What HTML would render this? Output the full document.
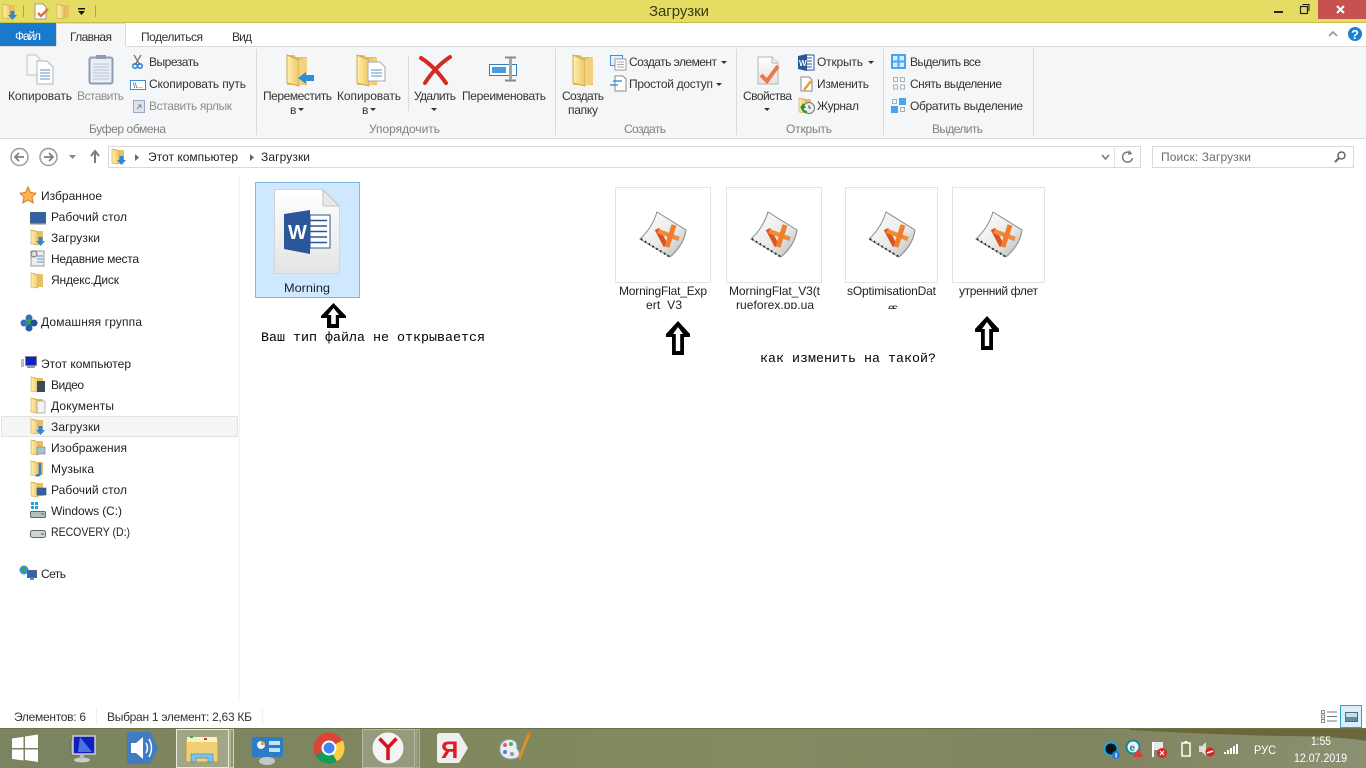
<!DOCTYPE html>
<html lang="ru"><head><meta charset="utf-8"><title>Загрузки</title>
<style>
html,body{margin:0;padding:0;width:1366px;height:768px;overflow:hidden;background:#fff}
svg{display:block;position:absolute;left:0;top:0}
text{font-family:"Liberation Sans","Noto Sans CJK SC",sans-serif;font-size:12px;fill:#222}
.g{fill:#8e8e8e}.l{fill:#808080}.t{fill:#333}.s{fill:#6d6d6d}
.m{font-family:"Liberation Mono",monospace;font-size:13.33px;fill:#000}
.w{fill:#fff}.tt{font-size:15px;fill:#3c3a10}
</style></head><body>
<svg width="1366" height="768" viewBox="0 0 1366 768" xmlns="http://www.w3.org/2000/svg">
<defs>
<linearGradient id="fo" x1="0" x2="1" y1="0" y2="0"><stop offset="0" stop-color="#fff0b0"/><stop offset="1" stop-color="#eec766"/></linearGradient>
<linearGradient id="pg" x1="0" x2="0" y1="0" y2="1"><stop offset="0" stop-color="#fff"/><stop offset="1" stop-color="#e4e4e4"/></linearGradient>
<linearGradient id="mt" x1="0" x2="1" y1="0" y2="1"><stop offset="0" stop-color="#fff"/><stop offset=".6" stop-color="#e8e8e8"/><stop offset="1" stop-color="#b5b5b5"/></linearGradient>
<linearGradient id="tb" x1="0" x2="1" y1="0" y2="0"><stop offset="0" stop-color="#7a8460"/><stop offset=".4" stop-color="#80885e"/><stop offset=".55" stop-color="#838c61"/><stop offset=".8" stop-color="#808460"/><stop offset="1" stop-color="#8b9070"/></linearGradient>
<g id="f"><path d="M1 1h4l1 1h7v13H1z" fill="#e8c061"/><path d="M1 1l7 2v13l-7-1z" fill="url(#fo)" stroke="#d3ad58" stroke-width=".7"/></g>
<g id="dl"><use href="#f"/><path d="M8.500 8h4v4h2.500l-4.500 5-4.500-5h2.500z" fill="#2f86d6"/></g>
<g id="bf"><path d="M2 1h7l2 2h11v28H2z" fill="#e8bf60"/><path d="M2 1l12 5v26l-12-3z" fill="url(#fo)" stroke="#cfa64f"/><path d="M14 6l8-3v26l-8 3z" fill="#f3d27f"/></g>
<g id="mt4"><path d="M657 212L686 230Q684 245 670 257L640 239Q652 228 657 212Z" fill="url(#mt)" stroke="#8a8a8a"/><path d="M641 239L670 257" stroke="#222" stroke-width="2" stroke-dasharray="1.500 3"/><path d="M657 229L666 246" stroke="#d9541e" stroke-width="5"/><path d="M658 231L679 239" stroke="#f08c3e" stroke-width="4.500"/><path d="M674 225L667 247" stroke="#ef7d2c" stroke-width="5"/></g>
<g id="arr"><path d="M12 0L24 13V16H18V34H6V16H0V13Z" fill="#000"/><path d="M12 6L17 13H14.200V30H9.800V13H7Z" fill="#fff"/></g>
</defs>

<!-- title bar -->
<rect width="1366" height="23" fill="#e5dc63"/><rect y="22" width="1366" height="1" fill="#c7bd50"/>
<use href="#dl" x="2" y="3"/>
<rect x="23" y="5" width="1" height="12" fill="#a8a366"/>
<path d="M35 4h8l3 3v12H35z" fill="#fff" stroke="#888" stroke-width=".8"/><path d="M38 13l3 3 7-7" stroke="#e5703f" stroke-width="2.500" fill="none"/>
<use href="#f" x="56" y="3"/>
<rect x="78" y="8" width="7" height="1.500" fill="#111"/><path d="M78 11h7l-3.500 4z" fill="#111"/>
<rect x="95" y="5" width="1" height="12" fill="#a8a366"/>
<text x="649" y="16" textLength="60" class="tt">Загрузки</text>
<rect x="1274" y="11" width="9" height="2" fill="#222"/>
<path d="M1302.500 4.500h6.500v6.500" fill="none" stroke="#222"/><rect x="1300.500" y="6.500" width="7" height="7" fill="none" stroke="#222" stroke-width="1.200"/>
<rect x="1318" width="48" height="19" fill="#c75050"/><path d="M1337 6l7 7M1344 6l-7 7" stroke="#fff" stroke-width="2"/>

<!-- tabs -->
<rect y="23" width="1366" height="23" fill="#fff"/>
<rect y="23" width="56" height="23" fill="#1979ca"/><text x="15" y="40" textLength="26" class="w">Файл</text>
<rect x="56.500" y="23.500" width="69" height="24" fill="#f5f6f7" stroke="#dadbdc"/><rect x="57" y="45" width="68" height="3" fill="#f5f6f7"/>
<text x="70" y="41" textLength="42" class="t">Главная</text>
<text x="141" y="41" textLength="62" class="t">Поделиться</text>
<text x="232" y="41" textLength="20" class="t">Вид</text>
<path d="M1329 36l4-4 4 4" fill="none" stroke="#9a9a9a" stroke-width="1.800"/>
<circle cx="1355" cy="34" r="7" fill="#1a80d2"/><text x="1351" y="39" class="w" style="font-size:13px;font-weight:bold">?</text>

<!-- ribbon -->
<rect y="46" width="1366" height="92" fill="#f5f6f7"/>
<rect y="46" width="56" height="1" fill="#dadbdc"/><rect x="126" y="46" width="1240" height="1" fill="#dadbdc"/>
<rect y="138" width="1366" height="1" fill="#dadbdc"/>
<g fill="#dadbdc"><rect x="256" y="49" width="1" height="86"/><rect x="555" y="49" width="1" height="86"/><rect x="736" y="49" width="1" height="86"/><rect x="883" y="49" width="1" height="86"/><rect x="1033" y="49" width="1" height="86"/><rect x="408" y="56" width="1" height="55"/></g>

<!-- ribbon icons -->
<path d="M27 55h9l4 4v16H27z" fill="#f8f8f8" stroke="#c2c2c2"/>
<path d="M37 61h10l6 6v17H37z" fill="#fff" stroke="#b5b5b5"/><path d="M40 70h10M40 73h10M40 76h10M40 79h10" stroke="#5f92c8"/>
<rect x="89.500" y="57.500" width="23" height="26" rx="2" fill="#e9edf5" stroke="#8d9db6" stroke-width="2"/><rect x="96" y="55" width="10" height="4" fill="#8d9db6"/><path d="M93 64h16M93 67h16M93 70h16M93 73h16M93 76h16M93 79h16" stroke="#bcc8dc"/>
<path d="M134 55l6 10M141 55l-6 10" stroke="#777" stroke-width="1.300"/><circle cx="135" cy="66" r="2.300" fill="none" stroke="#2a7fd0" stroke-width="1.500"/><circle cx="140" cy="66" r="2.300" fill="none" stroke="#2a7fd0" stroke-width="1.500"/>
<rect x="130.500" y="80.500" width="15" height="9" fill="#fff" stroke="#3d8fdc"/><text x="133" y="88" style="font-size:7px;fill:#333">\\...</text>
<rect x="133.500" y="100.500" width="11" height="12" fill="#dde3ec" stroke="#9aa9bf"/><path d="M137 109l4-4m-3 0h3v3" stroke="#7c8ca6" fill="none"/>
<use href="#bf" x="285" y="54"/><path d="M298 78l8-6v3h8v6h-8v3z" fill="#2b8fe0"/>
<use href="#bf" x="355" y="54"/><path d="M368 62h12l5 5v14h-17z" fill="#fff" stroke="#aaa"/><path d="M371 70h11M371 73h11M371 76h11" stroke="#5f92c8"/>
<path d="M421 58Q434 66 446 83M450 57Q435 67 425 83" fill="none" stroke="#d52a22" stroke-width="4" stroke-linecap="round"/>
<rect x="489.500" y="64.500" width="27" height="11" fill="#fff" stroke="#2f7fc0"/><rect x="492" y="67" width="14" height="6" fill="#4b9be0"/><path d="M505 57.500h11M505 80.500h11" stroke="#8a8a8a" stroke-width="2"/><rect x="509" y="58" width="3" height="22" fill="#a5a5a5"/>
<use href="#bf" x="571" y="54"/>
<rect x="610.500" y="55.500" width="12" height="10" fill="#e5f0fb" stroke="#3d8fdc"/><path d="M615 59h11v11h-11z" fill="#fff" stroke="#9a9a9a"/><path d="M617 62h7M617 64.500h7M617 67h7" stroke="#aaa"/>
<path d="M615 76h8l3 3v12h-11z" fill="#fff" stroke="#888"/><path d="M610 85h8M613 81h9" stroke="#2a7fd0" stroke-width="1.300"/>
<path d="M758 57h14l6 6v21h-20z" fill="url(#pg)" stroke="#b5b5b5"/><path d="M772 57v6h6" fill="#eee" stroke="#b5b5b5"/><path d="M761 75l6 6 11-15" stroke="#e9784a" stroke-width="4" fill="none"/>
<rect x="804" y="55" width="10" height="15" fill="#fff" stroke="#2b579a"/><path d="M806 58h6M806 61h6M806 64h6M806 67h6" stroke="#2b579a"/><path d="M798 56l9-2v17l-9-2z" fill="#2b579a"/><text x="799" y="66" style="font-size:8px;font-weight:bold" class="w">W</text>
<path d="M801 77h8l3 3v11h-11z" fill="#fff" stroke="#888"/><path d="M804 90l7-9" stroke="#e6a127" stroke-width="2.500"/>
<use href="#f" x="798" y="97"/><circle cx="809" cy="108" r="5.500" fill="#eee" stroke="#777"/><path d="M803 103l-3 5h6z" fill="#1e9a2c"/><path d="M802 106a5 5 0 0 0 5 6" stroke="#1e9a2c" stroke-width="2" fill="none"/><path d="M809 105v3h2" stroke="#555" fill="none"/>
<rect x="891" y="54" width="15" height="15" fill="#4aa3ef"/><path d="M893 56h4.500v4.500h-4.500zM899.500 56h4.500v4.500h-4.500zM893 62.500h4.500v4.500h-4.500zM899.500 62.500h4.500v4.500h-4.500z" fill="#d8ebfb"/>
<g fill="none" stroke="#aab0b8"><rect x="893.500" y="77.500" width="4" height="4"/><rect x="900.500" y="77.500" width="4" height="4"/><rect x="893.500" y="85" width="4" height="4"/><rect x="900.500" y="85" width="4" height="4"/></g>
<rect x="892.500" y="99.500" width="4" height="4" fill="none" stroke="#aab0b8"/><rect x="899" y="98" width="7" height="7" fill="#4aa3ef"/><rect x="891" y="106" width="7" height="7" fill="#4aa3ef"/><rect x="900.500" y="107.500" width="4" height="4" fill="none" stroke="#aab0b8"/>

<!-- ribbon text -->
<text x="8" y="100" textLength="64" class="t">Копировать</text>
<text x="77" y="100" textLength="47" class="g">Вставить</text>
<text x="149" y="66" textLength="50" class="t">Вырезать</text>
<text x="149" y="88" textLength="97" class="t">Скопировать путь</text>
<text x="149" y="110" textLength="83" class="g">Вставить ярлык</text>
<text x="89" y="133" textLength="77" class="l">Буфер обмена</text>
<text x="263" y="100" textLength="69" class="t">Переместить</text><text x="290" y="114" class="t">в</text><path d="M298 108h6l-3 3z" fill="#333"/>
<text x="337" y="100" textLength="64" class="t">Копировать</text><text x="362" y="114" class="t">в</text><path d="M370 108h6l-3 3z" fill="#333"/>
<text x="414" y="100" textLength="42" class="t">Удалить</text><path d="M431 108h6l-3 3z" fill="#333"/>
<text x="462" y="100" textLength="84" class="t">Переименовать</text>
<text x="369" y="133" textLength="71" class="l">Упорядочить</text>
<text x="562" y="100" textLength="42" class="t">Создать</text><text x="568" y="114" textLength="30" class="t">папку</text>
<text x="629" y="66" textLength="88" class="t">Создать элемент</text><path d="M721 61h6l-3 3z" fill="#333"/>
<text x="629" y="88" textLength="84" class="t">Простой доступ</text><path d="M716 83h6l-3 3z" fill="#333"/>
<text x="624" y="133" textLength="42" class="l">Создать</text>
<text x="743" y="100" textLength="49" class="t">Свойства</text><path d="M764 108h6l-3 3z" fill="#333"/>
<text x="817" y="66" textLength="46" class="t">Открыть</text><path d="M868 61h6l-3 3z" fill="#333"/>
<text x="817" y="88" textLength="52" class="t">Изменить</text>
<text x="817" y="110" textLength="42" class="t">Журнал</text>
<text x="786" y="133" textLength="46" class="l">Открыть</text>
<text x="910" y="66" textLength="71" class="t">Выделить все</text>
<text x="910" y="88" textLength="92" class="t">Снять выделение</text>
<text x="910" y="110" textLength="113" class="t">Обратить выделение</text>
<text x="932" y="133" textLength="51" class="l">Выделить</text>

<!-- nav -->
<g fill="none" stroke="#9c9c9c" stroke-width="1.500"><circle cx="19.500" cy="157" r="8.500"/><circle cx="48.500" cy="157" r="8.500"/></g>
<path d="M24 157h-8M19 153l-4 4 4 4M44 157h8M49 153l4 4-4 4" fill="none" stroke="#7d7d7d" stroke-width="1.700"/>
<path d="M69 155h7l-3.500 4z" fill="#8a8a8a"/>
<path d="M95 163v-11M91 156l4-5 4 5" fill="none" stroke="#7d7d7d" stroke-width="2"/>
<rect x="108.500" y="146.500" width="1032" height="21" fill="#fff" stroke="#d9d9d9"/>
<rect x="1114" y="147" width="1" height="20" fill="#e2e2e2"/>
<use href="#dl" x="111" y="148"/>
<path d="M135 154l4 3.500-4 3.500z" fill="#666"/><path d="M250 154l4 3.500-4 3.500z" fill="#666"/>
<text x="148" y="161" textLength="90">Этот компьютер</text>
<text x="261" y="161" textLength="49">Загрузки</text>
<path d="M1102 155l3.500 4 3.500-4" fill="none" stroke="#777" stroke-width="1.500"/>
<path d="M1131.500 154a5 5 0 1 0 1 4" fill="none" stroke="#777" stroke-width="1.500"/><path d="M1129 150l3 4-4 1z" fill="#777"/>
<rect x="1152.500" y="146.500" width="201" height="21" fill="#fff" stroke="#d9d9d9"/>
<text x="1161" y="161" textLength="90" class="s">Поиск: Загрузки</text>
<circle cx="1341.500" cy="155.500" r="3.500" fill="none" stroke="#666" stroke-width="1.500"/><path d="M1339 158l-4 4" stroke="#666" stroke-width="2"/>

<!-- sidebar -->
<rect x="239" y="175" width="1" height="525" fill="#f3f3f3"/>
<rect x="1.500" y="416.500" width="236" height="20" fill="#f5f5f5" stroke="#e2e2e2"/>
<path d="M28 187l2.500 5.500 5.500.7-4 4 1.200 5.800-5.200-3-5.200 3 1.200-5.800-4-4 5.500-.7z" fill="#f7b84c" stroke="#e0762a"/>
<rect x="30.500" y="212.500" width="15" height="10" fill="#2f62a8" stroke="#44618a"/><rect x="30" y="223" width="16" height="1.500" fill="#888"/>
<use href="#dl" x="30" y="229"/>
<rect x="31" y="251" width="13" height="15" fill="#eee" stroke="#999"/><circle cx="34" cy="254" r="3" fill="#ddd" stroke="#777"/><path d="M37 256h6M37 259h6M37 262h6" stroke="#5b92c9"/>
<use href="#f" x="30" y="272"/>
<circle cx="24" cy="323" r="3.500" fill="#3a6fb8"/><circle cx="29" cy="318" r="3.500" fill="#3a6fb8"/><circle cx="30" cy="323" r="3.500" fill="#35a24a"/><circle cx="34" cy="323" r="3.500" fill="#284f96"/><circle cx="29" cy="328" r="3.500" fill="#2a5aa6"/>
<rect x="25.500" y="356.500" width="11" height="9" fill="#1320c8" stroke="#888"/><rect x="21" y="359" width="3" height="8" fill="#bbb"/><rect x="27" y="366" width="8" height="2" fill="#999"/>
<use href="#f" x="30" y="376"/><rect x="37" y="381" width="8" height="11" fill="#3b4a5a"/>
<use href="#f" x="30" y="397"/><rect x="37" y="401" width="8" height="12" fill="#f3f3f3" stroke="#999" stroke-width=".7"/>
<use href="#dl" x="30" y="418"/>
<use href="#f" x="30" y="439"/><rect x="37" y="447" width="8" height="7" fill="#9ec4d9" stroke="#888" stroke-width=".7"/>
<use href="#f" x="30" y="460"/><path d="M40 463v11a3 3 0 0 1-4 1" stroke="#2a80d0" stroke-width="2.500" fill="none"/>
<use href="#f" x="30" y="481"/><rect x="37" y="488" width="9" height="7" fill="#2f62a8" stroke="#555" stroke-width=".7"/>
<path d="M31 502h3v3h-3zM35 502h3v3h-3zM31 506h3v3h-3zM35 506h3v3h-3z" fill="#19a3e8"/><rect x="30.500" y="511.500" width="15" height="6" rx="1" fill="#b9bcc0" stroke="#666"/><rect x="41" y="513" width="3" height="2" fill="#5bbd4a"/>
<rect x="30.500" y="530.500" width="15" height="7" rx="2" fill="#cfd2d6" stroke="#666"/><rect x="41" y="533" width="3" height="2" fill="#5bbd4a"/>
<circle cx="24" cy="570" r="4.500" fill="#3b8fd6"/><path d="M21 568h4v3h-3z" fill="#3ba24a"/><rect x="27.500" y="570.500" width="9" height="7" fill="#2b63c6" stroke="#666"/><rect x="30" y="578" width="4" height="2" fill="#888"/>
<g>
<text x="41" y="200" textLength="61">Избранное</text>
<text x="51" y="221" textLength="76">Рабочий стол</text>
<text x="51" y="242" textLength="49">Загрузки</text>
<text x="51" y="263" textLength="88">Недавние места</text>
<text x="51" y="284" textLength="68">Яндекс.Диск</text>
<text x="41" y="326" textLength="101">Домашняя группа</text>
<text x="41" y="368" textLength="90">Этот компьютер</text>
<text x="51" y="389" textLength="33">Видео</text>
<text x="51" y="410" textLength="63">Документы</text>
<text x="51" y="431" textLength="49">Загрузки</text>
<text x="51" y="452" textLength="76">Изображения</text>
<text x="51" y="473" textLength="43">Музыка</text>
<text x="51" y="494" textLength="76">Рабочий стол</text>
<text x="51" y="515" textLength="71">Windows (C:)</text>
<text x="51" y="536" textLength="79" lengthAdjust="spacingAndGlyphs">RECOVERY (D:)</text>
<text x="41" y="578" textLength="25">Сеть</text>
</g>

<!-- selected file -->
<rect x="255.500" y="182.500" width="104" height="115" fill="#cde8ff" stroke="#7db8e8"/>
<path d="M274.500 189.500h48l17 17v67h-65z" fill="url(#pg)" stroke="#d4d4d4"/>
<path d="M323 190v16h16z" fill="#e9e9e9" stroke="#c4c4c4"/>
<rect x="310" y="215" width="20" height="33" fill="#fff" stroke="#2b579a"/>
<path d="M310 220.500h17M310 226h17M310 231.500h17M310 237h17M310 242.500h17" stroke="#2b579a" stroke-width="1.600"/>
<path d="M284 214l26-4v44l-26-5z" fill="#2b579a"/>
<text x="288" y="239" class="w" style="font-size:20px;font-weight:bold" textLength="17">W</text>
<text x="284" y="292" textLength="46" lengthAdjust="spacingAndGlyphs">Morning</text>

<!-- thumbnails -->
<g fill="#fff" stroke="#e3e3e3"><rect x="615.500" y="187.500" width="95" height="95"/><rect x="726.500" y="187.500" width="95" height="95"/><rect x="845.500" y="187.500" width="92" height="95"/><rect x="952.500" y="187.500" width="92" height="95"/></g>
<use href="#mt4"/><use href="#mt4" x="111"/><use href="#mt4" x="229"/><use href="#mt4" x="336"/>
<svg x="610" y="284" width="440" height="25" viewBox="610 284 440 25">
<text x="619" y="295" textLength="88">MorningFlat_Exp</text>
<text x="646" y="309" textLength="36">ert_V3</text>
<text x="729" y="295" textLength="91">MorningFlat_V3(t</text>
<text x="736" y="309" textLength="78">rueforex.pp.ua</text>
<text x="847" y="295" textLength="89">sOptimisationDat</text>
<text x="888" y="312" textLength="10">es</text>
<text x="959" y="295" textLength="79">утренний флет</text>
</svg>

<!-- annotations -->
<path d="M333.500 303L346 316V318H339V328H327V318H321V316Z" fill="#000"/><path d="M333.500 308L339 315H335.800V324H331.200V315H328Z" fill="#fff"/>
<use href="#arr" x="666" y="321"/><use href="#arr" x="975" y="316"/>
<text x="261" y="341" class="m" textLength="224">Ваш тип файла не открывается</text>
<text x="760" y="362" class="m" textLength="176">как изменить на такой?</text>

<!-- status -->
<text x="14" y="721" textLength="72" class="t">Элементов: 6</text>
<rect x="96" y="708" width="1" height="17" fill="#f0f0f0"/>
<text x="107" y="721" textLength="145" class="t">Выбран 1 элемент: 2,63 КБ</text>
<rect x="262" y="708" width="1" height="17" fill="#f0f0f0"/>
<g fill="none" stroke="#8a8a8a"><rect x="1321.500" y="710.500" width="3" height="3"/><rect x="1321.500" y="715" width="3" height="3"/><rect x="1321.500" y="719.500" width="3" height="3"/></g>
<path d="M1327 712h10M1327 716.500h10M1327 721h10" stroke="#777"/>
<rect x="1340.500" y="705.500" width="21" height="22" fill="#dbeefb" stroke="#2ea0d8"/>
<rect x="1345.500" y="712.500" width="12" height="9" fill="#5d8f9e" stroke="#666"/><rect x="1346" y="713" width="11" height="4" fill="#bfe2ee"/>

<!-- taskbar -->
<rect y="728" width="1366" height="40" fill="url(#tb)"/>
<rect y="728" width="1366" height="1" fill="#6c7148"/>
<path d="M1130 729H1366V741Q1340 736 1280 736Q1200 734 1130 730Z" fill="#6a683a"/>
<path d="M12 738.500l11.500-1.700v11.200H12zM25 736.500l13-2v13.500H25zM12 749.500h11.500v11L12 759zM25 749.500h13V762l-13-2z" fill="#fff"/>
<rect x="71" y="740" width="6" height="15" fill="#aaa" stroke="#555" stroke-width=".6"/><path d="M73 736l22 0v18H73z" fill="#0d1fc4" stroke="#cfcfcf" stroke-width="1.500"/><path d="M80 737l12 15H78z" fill="#4a74e0"/><ellipse cx="82" cy="760" rx="8" ry="2.500" fill="#ccc"/><rect x="80" y="754" width="4" height="5" fill="#bbb"/>
<path d="M130 732h20l8 16-8 16h-20q-3 0-3-3v-26q0-3 3-3z" fill="#3f7cc4"/><path d="M131 743h5l7-6v22l-7-6h-5z" fill="#fff"/><path d="M146 743q3 5 0 10M149 739q5 9 0 18" stroke="#fff" stroke-width="1.500" fill="none"/>
<rect x="176.500" y="729.500" width="52" height="38" fill="#a0a786" stroke="#e8e8dc"/><rect x="230" y="729.500" width="3.500" height="38" fill="#8d9573" stroke="#e4e4d8" stroke-width=".8"/>
<rect x="186" y="739" width="32" height="23" rx="1" fill="#f0cf76" stroke="#c39a3f"/><path d="M187 737h30v5h-30z" fill="#fdf0c0"/><rect x="190" y="736" width="3" height="2" fill="#3aa844"/><rect x="204" y="738" width="3" height="2" fill="#cc3a2a"/><path d="M191 762v-8h22v8h-5v-4h-12v4z" fill="#7fc3ea" stroke="#3a90c4" stroke-width=".7"/>
<rect x="252" y="737" width="31" height="20" rx="2" fill="#2a7dc6"/><circle cx="261" cy="745" r="4" fill="#f5f5f5"/><path d="M261 745v-4a4 4 0 0 1 4 4z" fill="#f0a030"/><rect x="269" y="741" width="11" height="4" fill="#bfe3fb"/><rect x="269" y="748" width="11" height="4" fill="#bfe3fb"/><ellipse cx="267" cy="761" rx="8" ry="4" fill="#c7c7c7"/>
<circle cx="329" cy="748" r="15.500" fill="#db4437"/><path d="M329 748L315.600 755.700A15.500 15.500 0 0 0 337 761.300z" fill="#0f9d58"/><path d="M329 748L337 761.300A15.500 15.500 0 0 0 344.500 748A15.500 15.500 0 0 0 342.500 740.300z" fill="#ffcd40"/><circle cx="329" cy="748" r="7.500" fill="#fff"/><circle cx="329" cy="748" r="5.500" fill="#4285f4"/>
<rect x="362.500" y="729.500" width="52" height="38" fill="#959b7c" stroke="#b6b9a2"/><rect x="416" y="729.500" width="3.500" height="38" fill="#8d9573" stroke="#b6b9a2" stroke-width=".8"/>
<circle cx="388" cy="748" r="15.500" fill="#f4f4f4"/><path d="M379.500 738.500l8.500 9 8.500-9M388 747v13" stroke="#d5121e" stroke-width="3.500" fill="none"/>
<path d="M440 733h19l9 15-9 15h-19q-3 0-3-3v-24q0-3 3-3z" fill="#efefef"/><text x="441" y="758" style="font-size:24px;font-weight:bold;fill:#e01b22">Я</text>
<path d="M516 742c-6-5-15-2-16 5s3 12 11 12 9-4 8-7-3-3-2-6z" fill="#e9eef2" stroke="#8ba2b5"/><circle cx="505" cy="745" r="2" fill="#e55"/><circle cx="511" cy="744" r="2" fill="#4b4"/><circle cx="505" cy="752" r="2" fill="#48c"/><circle cx="512" cy="754" r="2" fill="#999"/><path d="M529 734l-10 25" stroke="#d9912f" stroke-width="3"/><path d="M527 733l4-2 0 6z" fill="#c87c2e"/>

<!-- tray -->
<circle cx="1111" cy="749" r="6.500" fill="#111" stroke="#19a7e8" stroke-width="2"/><circle cx="1116" cy="755" r="4" fill="#1b7fd8"/><rect x="1115.500" y="753" width="1.200" height="4.500" fill="#fff"/>
<circle cx="1133" cy="747" r="6.500" fill="#eef" stroke="#12898f" stroke-width="2"/><text x="1129.500" y="751" style="font-size:10px;font-weight:bold;fill:#12898f">e</text><path d="M1138 749l5 8h-10z" fill="#e23a3a"/>
<path d="M1153 742v15" stroke="#fff" stroke-width="2"/><path d="M1154 742h9v8h-9z" fill="#e8e8e8"/><circle cx="1162" cy="753" r="5" fill="#d92a2a"/><path d="M1160 751l4 4m0-4l-4 4" stroke="#fff" stroke-width="1.200"/>
<rect x="1182" y="743" width="8" height="13" fill="none" stroke="#fff" stroke-width="1.500"/><rect x="1184.500" y="741" width="3" height="2" fill="#fff"/>
<path d="M1199 746h3l4-4v14l-4-4h-3z" fill="#ddd"/><circle cx="1210" cy="752" r="4.500" fill="#e01b22"/><path d="M1207 753l6-2" stroke="#fff" stroke-width="1.500"/>
<g fill="#fff"><rect x="1224" y="752" width="2" height="2"/><rect x="1227" y="750" width="2" height="4"/><rect x="1230" y="748" width="2" height="6"/><rect x="1233" y="746" width="2" height="8"/><rect x="1236" y="744" width="2" height="10"/></g>
<text x="1254" y="754" textLength="22" lengthAdjust="spacingAndGlyphs" class="w">РУС</text>
<text x="1311" y="745" textLength="20" lengthAdjust="spacingAndGlyphs" class="w">1:55</text>
<text x="1294" y="762" textLength="53" lengthAdjust="spacingAndGlyphs" class="w">12.07.2019</text>
</svg>
</body></html>
